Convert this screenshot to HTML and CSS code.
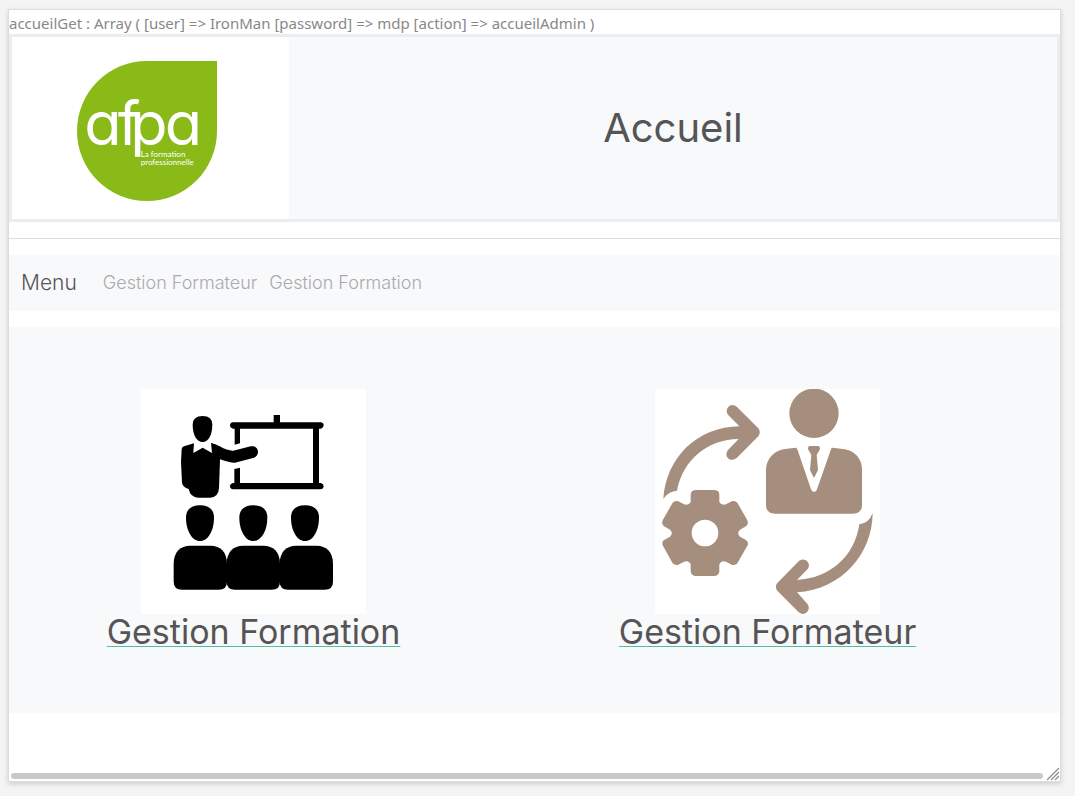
FILE: index.html
```html
<!DOCTYPE html>
<html lang="fr">
<head>
<meta charset="utf-8">
<meta name="viewport" content="width=device-width, initial-scale=1">
<title>Accueil</title>
<link rel="stylesheet" href="styles.css">
</head>
<body>
<div class="panel">
  <div class="debug">accueilGet : Array ( [user] =&gt; IronMan [password] =&gt; mdp [action] =&gt; accueilAdmin )</div>
  <header class="banner">
    <div class="banner-logo">
      <svg class="logo" viewBox="51 33 420 420" role="img" aria-label="afpa">
        <path fill="#8aba17" d="M261 33H471V243A210 210 0 1 1 261 33Z"/>
        <text class="logo-name" x="73 173 211 314" y="285">afpa</text>
        <text class="logo-tag" x="242" y="321">La formation</text>
        <text class="logo-tag" x="242" y="345">professionnelle</text>
      </svg>
    </div>
    <h1 class="banner-title">Accueil</h1>
  </header>
  <hr class="rule">
  <nav class="menu">
    <a class="menu-brand" href="#">Menu</a>
    <a class="menu-link" href="#formateur">Gestion Formateur</a>
    <a class="menu-link" href="#formation">Gestion Formation</a>
  </nav>
  <main class="choices">
    <a class="choice" href="#formation">
      <svg class="choice-icon" viewBox="33 27 675 675" aria-hidden="true">
        <path d="M188 134Q188 108 218 108Q247 108 247 134C247 164 235 186 218 186C200 186 188 164 188 134Z"/>
        <path d="M192 190L190 219L218 203L246 219L243 189Q256 192 269 199Q294 213 310 212L362 199C377 196 385 207 384 217Q383 229 372 233L315 248Q304 250 270 238L267 325Q265 353 240 353H205Q181 352 176 327Q158 321 156 308L153 245L155 207Q156 201 162 199Z"/>
        <path d="M431 105H450V127H572Q581 128 581 136Q581 143 573 146H567V309H573Q581 311 581 319Q580 328 571 328H309Q300 327 300 319Q300 311 309 309H313V267L330 263V309H549V146H330V190L314 194V146H309Q300 144 300 136Q301 127 309 127H431Z"/>
        <path id="head" d="M168 413Q168 377 210 376Q252 377 252 413C252 450 235 483 210 483C185 483 168 450 168 413Z"/>
        <use href="#head" x="160"/>
        <use href="#head" x="315"/>
        <path id="body" d="M131 551C131 515 152 497 180 497H242C270 497 291 515 291 551V605Q291 629 266 629H156Q131 629 131 605Z"/>
        <use href="#body" x="159"/>
        <use href="#body" x="318"/>
      </svg>
      <h2 class="choice-title">Gestion Formation</h2>
    </a>
    <a class="choice" href="#formateur">
      <svg class="choice-icon" viewBox="30 27 675 675" fill="#a68e7e" aria-hidden="true">
        <circle cx="507" cy="100" r="74"/>
        <path d="M452 203Q455 203 457 208L498 328Q501 336 507 336Q514 336 516 328L558 208Q559 203 563 203L600 208C632 214 651 239 651 268V374Q651 401 624 401H390Q363 401 363 374V268C364 238 386 213 415 208Z"/>
        <path d="M493 198H521Q526 200 525 208L515 225L519 270L507 294L495 270L499 225L489 208Q488 200 493 198Z"/>
        <path d="M55 357C63 233 156 141 283 139L249 104C239 90 251 75 262 75Q270 75 276 81L340 145Q349 157 340 169L275 234Q267 241 257 239C245 236 240 222 249 210L281 177C189 178 114 238 96 332Q71 333 55 357Z"/>
        <path d="M683 399C682 521 591 628 456 637L487 671C499 687 484 702 473 702Q466 701 461 697L397 632Q388 620 397 609L461 544C474 531 492 542 492 557Q491 563 488 567L456 600C554 595 629 530 643 433Q671 431 683 399Z"/>
        <path fill-rule="evenodd" d="M151 330H209Q223 331 223 344V366Q229 377 243 373L260 364Q270 360 277 368L307 421Q311 431 304 438L285 449Q274 459 285 470L304 481Q311 487 308 496L277 550Q271 557 260 554L243 545Q229 540 223 553V574Q222 587 209 588H151Q138 587 137 574V553Q131 540 117 545L100 554Q90 557 83 550L53 496Q50 487 56 481L75 470Q86 459 75 449L56 438Q49 431 53 421L83 368Q90 360 100 364L117 373Q131 378 137 366V344Q138 331 151 330ZM180 419A40 40 0 1 0 180 499A40 40 0 1 0 180 419Z"/>
      </svg>
      <h2 class="choice-title">Gestion Formateur</h2>
    </a>
  </main>
  <div class="panel-foot">
    <div class="scrollbar"></div>
    <svg class="grip" viewBox="0 0 14 14" aria-hidden="true"><path d="M1 13L13 1M5 13L13 5M9 13L13 9" stroke="#8c8c8c" stroke-width="1.2" fill="none"/></svg>
  </div>
</div>
</body>
</html>
```
FILE: styles.css
```css
* {
  box-sizing: border-box;
}

body {
  display: flex;
  min-height: 100vh;
  margin: 0;
  padding: 9px 14px 14px 8px;
  background: #f4f4f4;
  color: #555;
  font-family: Inter, "Open Sans", sans-serif;
  font-size: 16px;
  line-height: 24px;
}

.panel {
  display: flex;
  flex: 1;
  flex-direction: column;
  min-width: 0;
  border: 1px solid #ddd;
  background: #fff;
  box-shadow: 0 2px 5px rgba(0, 0, 0, 0.16);
}

.debug {
  padding-top: 1px;
  margin-bottom: -1px;
  color: #888;
  font-family: "Noto Sans", "Open Sans", sans-serif;
  font-size: 15px;
}

.banner {
  display: flex;
  border: 3px solid #ebedef;
  background: #f8f9fb;
}

.banner-logo {
  flex: 0 0 26.5%;
  padding: 24px 0 18px 65px;
  background: #fff;
}

.logo {
  display: block;
  width: 140px;
  height: 140px;
}

.logo-name {
  fill: #fff;
  font-family: Inter, sans-serif;
  font-feature-settings: "cv11";
  font-size: 183px;
  font-weight: 400;
}

.logo-tag {
  fill: #fff;
  font-family: Lato, sans-serif;
  font-size: 24px;
}

.banner-title {
  flex: 1;
  align-self: center;
  margin: 0;
  font-size: 40px;
  font-weight: 400;
  line-height: 48px;
  text-align: center;
}

.rule {
  width: 100%;
  height: 1px;
  margin: 16px 0;
  border: 0;
  background: #ddd;
}

.menu {
  display: flex;
  align-items: center;
  gap: 12px;
  min-height: 56px;
  margin-bottom: 16px;
  padding: 0 12px;
  background: #f8f9fb;
}

.menu-brand {
  margin-right: 14px;
  color: #555;
  font-size: 21px;
  font-weight: 300;
  text-decoration: none;
}

.menu-link {
  color: #aaa;
  font-size: 18px;
  font-weight: 300;
  text-decoration: none;
}

.choices {
  display: grid;
  grid-template-columns: 489fr 539fr 23fr;
  justify-items: center;
  padding: 62px 0 60px;
  background: #f8f9fb;
}

.choice {
  display: flex;
  flex-direction: column;
  align-items: center;
  color: #555;
  text-decoration: none;
}

.choice-icon {
  display: block;
  width: 225px;
  height: 225px;
  background: #fff;
}

.choice-title {
  margin: 0;
  font-size: 34px;
  font-weight: 400;
  line-height: 36px;
  padding-bottom: 3px;
  text-decoration: underline 1px #55bba4;
  text-decoration-skip-ink: none;
  text-underline-offset: 2px;
}

.panel-foot {
  display: flex;
  align-items: flex-end;
  gap: 3px;
  margin-top: auto;
  padding: 0 0 0 2px;
}

.scrollbar {
  flex: 1;
  height: 6px;
  margin-bottom: 2px;
  border-radius: 3px;
  background: #c9c9c9;
}

.grip {
  width: 14px;
  height: 14px;
}
```
